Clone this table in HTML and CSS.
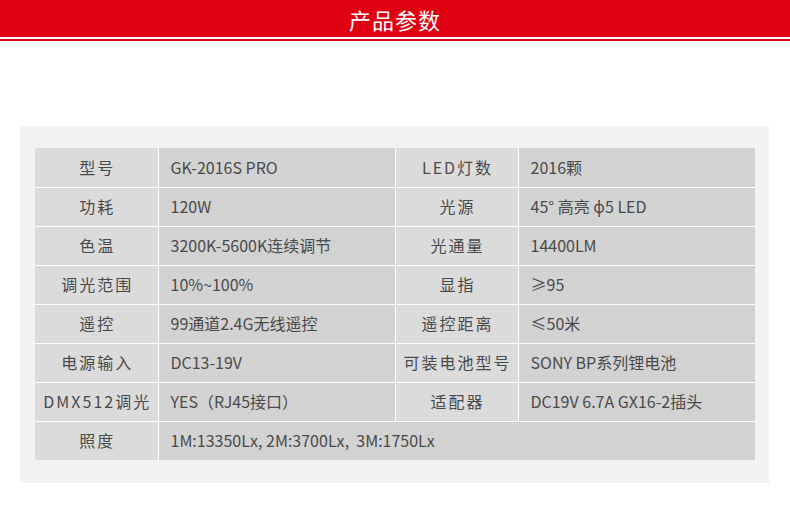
FILE: index.html
```html
<!DOCTYPE html>
<html lang="zh">
<head>
<meta charset="utf-8">
<title>产品参数</title>
<link rel="stylesheet" href="styles.css">
</head>
<body>
<header class="banner">
  <h1 class="banner-title">产品参数</h1>
</header>
<div class="banner-rule"></div>
<section class="panel">
  <table class="spec">
    <colgroup>
      <col class="c-label"><col class="c-value"><col class="c-label"><col class="c-value">
    </colgroup>
    <tr>
      <td class="label">型号</td><td class="value">GK-2016S PRO</td>
      <td class="label">LED灯数</td><td class="value">2016颗</td>
    </tr>
    <tr>
      <td class="label">功耗</td><td class="value">120W</td>
      <td class="label">光源</td><td class="value">45° 高亮 ϕ5 LED</td>
    </tr>
    <tr>
      <td class="label">色温</td><td class="value">3200K-5600K连续调节</td>
      <td class="label">光通量</td><td class="value">14400LM</td>
    </tr>
    <tr>
      <td class="label">调光范围</td><td class="value">10%~100%</td>
      <td class="label">显指</td><td class="value">≥95</td>
    </tr>
    <tr>
      <td class="label">遥控</td><td class="value">99通道2.4G无线遥控</td>
      <td class="label">遥控距离</td><td class="value">≤50米</td>
    </tr>
    <tr>
      <td class="label">电源输入</td><td class="value">DC13-19V</td>
      <td class="label">可装电池型号</td><td class="value">SONY BP系列锂电池</td>
    </tr>
    <tr>
      <td class="label">DMX512调光</td><td class="value">YES（RJ45接口）</td>
      <td class="label">适配器</td><td class="value">DC19V 6.7A GX16-2插头</td>
    </tr>
    <tr>
      <td class="label">照度</td><td class="value" colspan="3">1M:13350Lx, 2M:3700Lx,&nbsp; 3M:1750Lx</td>
    </tr>
  </table>
</section>
</body>
</html>
```

FILE: styles.css
```css
* { box-sizing: border-box; }
html, body { margin: 0; padding: 0; background: #ffffff; }
body {
  font-family: "Noto Sans CJK SC", "Noto Sans", sans-serif;
  color: #4a4a4a;
  width: 790px;
}
.banner {
  height: 37px;
  background: #e00012;
  display: flex;
  align-items: center;
  justify-content: center;
}
.banner-title {
  margin: 0;
  font-size: 22px;
  font-weight: 400;
  color: #ffffff;
  letter-spacing: 1px;
  line-height: 1;
  padding-top: 1px;
}
.banner-rule {
  margin-top: 2px;
  height: 2px;
  background: #e00012;
}
.panel {
  margin: 85px 21px 0 20px;
  background: #f2f2f2;
  padding: 22px 15px 23px 15px;
}
.spec {
  width: 719px;
  border-collapse: collapse;
  border-style: hidden;
  table-layout: fixed;
  font-size: 16px;
}
.c-label { width: 123px; }
.c-value { width: 237px; }
.spec td {
  height: 39px;
  border: 1px solid #ffffff;
  padding: 0;
  vertical-align: middle;
  white-space: nowrap;
  line-height: 1.2;
}
.label {
  background: #dcdbdc;
  text-align: center;
  letter-spacing: 2px;
  padding-left: 2px !important;
}
.value {
  background: #d2d2d2;
  text-align: left;
  padding-left: 12px !important;
}
```
